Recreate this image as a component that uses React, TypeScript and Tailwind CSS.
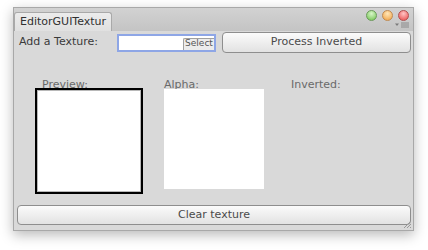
export default function App() {
  return (
    <main className="h-[250px] w-[428px] bg-white pl-[13px] pt-[7px] font-['DejaVu_Sans',sans-serif]">
      <div className="flex h-[224px] w-[401px] flex-col border border-[#a8a8a8] bg-[#d9d9d9] shadow-[0_4px_12px_rgba(0,0,0,0.28)]">
        {/* title bar with tab */}
        <div className="flex h-[23px] items-end bg-gradient-to-b from-[#d2d2d2] to-[#c4c4c4]">
          <div className="flex h-[19px] w-[98px] items-center rounded-t-[3px] border border-b-0 border-[#a9a9a9] bg-gradient-to-b from-[#ececec] to-[#e0e0e0] pl-[5px] text-[11px] text-[#303030]">
            EditorGUITextur
          </div>
          <div className="ml-auto flex h-full flex-col items-end pr-[4px] pt-[2px]">
            <div className="flex gap-[5px]">
              <span className="h-[11px] w-[11px] rounded-full border border-[#6a9a5a] bg-[radial-gradient(circle_at_50%_30%,#d8f5c8,#6ec24c)]" />
              <span className="h-[11px] w-[11px] rounded-full border border-[#c08a50] bg-[radial-gradient(circle_at_50%_30%,#ffe6b8,#f0a040)]" />
              <span className="h-[11px] w-[11px] rounded-full border border-[#b05050] bg-[radial-gradient(circle_at_50%_30%,#ffc4c4,#e84848)]" />
            </div>
            <svg width="14" height="6" viewBox="0 0 14 6" className="mt-[1px]">
              <path d="M0 1.5h4L2 4z" fill="#7a7a7a" />
              <path d="M6 1h8M6 3h8M6 5h8" stroke="#8a8a8a" strokeWidth="1" />
            </svg>
          </div>
        </div>

        {/* texture row */}
        <div className="mt-[1px] flex h-[21px] items-center pl-[5px] pr-[2px]">
          <span className="w-[98px] text-[11px] text-[#3a3a3a]">Add a Texture:</span>
          <div className="flex h-[18px] w-[99px] items-end justify-end border-2 border-[#8ea6e6] bg-white">
            <span className="flex h-[12px] w-[31px] items-center justify-center rounded-tl-[2px] border-l border-t border-[#a0a0a0] bg-[#ececec] text-[9px] text-[#555]">
              Select
            </span>
          </div>
          <button className="ml-[6px] flex h-[21px] w-[189px] items-center justify-center rounded-[4px] border border-[#8e8e8e] bg-gradient-to-b from-[#fbfbfb] to-[#e2e2e2] text-[11px] text-[#4a4a4a]">
            Process Inverted
          </button>
        </div>

        {/* previews */}
        <div className="mt-[25px] flex pl-[21px]">
          <div className="flex w-[129px] flex-col">
            <span className="ml-[7px] text-[11px] leading-[13px] text-[#6a6a6a]">Preview:</span>
            <div className="relative mt-[-3px] h-[106px] w-[108px] border-2 border-black">
              <div className="h-full w-full border border-[#b8b8b8] bg-white" />
            </div>
          </div>
          <div className="flex w-[127px] flex-col">
            <span className="h-[13px] text-[11px] leading-[13px] text-[#6a6a6a]">Alpha:</span>
            <div className="mt-[-2px] h-[100px] w-[100px] bg-white" />
          </div>
          <span className="h-[13px] text-[11px] leading-[13px] text-[#6a6a6a]">Inverted:</span>
        </div>

        {/* bottom */}
        <div className="relative mt-auto flex pb-[5px] pl-[3px] pr-[2px]">
          <button className="flex h-[20px] w-[394px] items-center justify-center rounded-[4px] border border-[#8e8e8e] bg-gradient-to-b from-[#fbfbfb] to-[#e2e2e2] text-[11px] text-[#4a4a4a]">
            Clear texture
          </button>
          <svg width="10" height="10" viewBox="0 0 10 10" className="absolute bottom-[1px] right-[1px]">
            <path d="M9 2L2 9M9 5L5 9M9 8L8 9" stroke="#9a9a9a" strokeWidth="1" />
          </svg>
        </div>
      </div>
    </main>
  );
}
